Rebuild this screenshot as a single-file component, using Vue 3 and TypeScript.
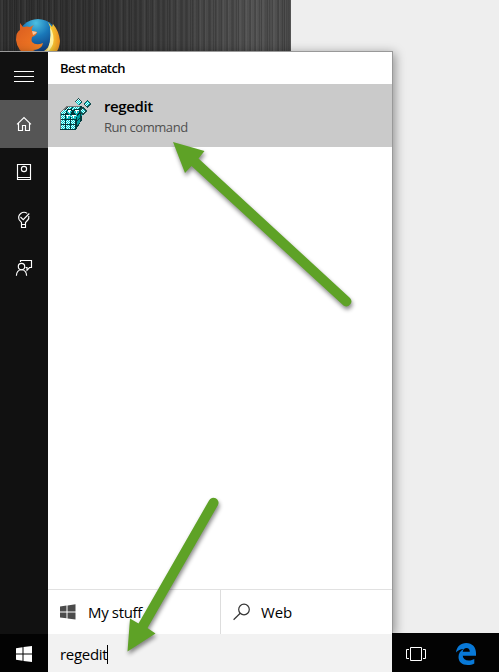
<script setup lang="ts">
import { ref } from 'vue'

const query = ref<string>('regedit')
const cells: { x: number; y: number }[] = []
for (let row = 0; row < 3; row++) {
  for (let col = 0; col < 3; col++) cells.push({ x: 1 + col * 5, y: 17 + row * 5 })
}
const grain = Array.from({ length: 291 }, (_, x) => ({
  x,
  light: (x * 37 + x * x * 11) % 17 > 8,
  alpha: ((x * 53 + x * x * 7) % 23) / 230,
}))
</script>

<template>
  <main class="desktop">
    <div class="wallpaper">
      <svg class="grain" width="291" height="51" viewBox="0 0 291 51" shape-rendering="crispEdges">
        <rect v-for="line in grain" :key="line.x" :x="line.x" y="0" width="1" height="51" :fill="line.light ? '#aaa' : '#000'" :fill-opacity="line.alpha * (line.light ? 1 : 2)" />
      </svg>
      <svg class="firefox" viewBox="0 0 44 44" width="44" height="44">
        <defs>
          <radialGradient id="globe" cx=".45" cy=".1" r=".75">
            <stop offset="0" stop-color="#4cc0e2" /><stop offset=".45" stop-color="#1977b8" /><stop offset="1" stop-color="#103878" />
          </radialGradient>
          <linearGradient id="fox" x1="0" y1="0" x2="1" y2="1">
            <stop offset="0" stop-color="#d75b20" /><stop offset=".55" stop-color="#ee7422" /><stop offset="1" stop-color="#f7a32c" />
          </linearGradient>
          <linearGradient id="tail" x1="0" y1="0" x2="1" y2="0">
            <stop offset="0" stop-color="#fff19a" /><stop offset=".55" stop-color="#f7cb35" /><stop offset="1" stop-color="#e98c20" />
          </linearGradient>
        </defs>
        <circle cx="22" cy="20" r="20" fill="url(#globe)" />
        <path d="M32 3L36 8L37 5Q43 12 44 22Q43 36 30 42L25 34Q35 29 35 18Q36 11 32 3Z" fill="url(#tail)" />
        <path d="M34 8Q39 16 37 25Q34 32 29 35Q36 25 34 8Z" fill="#fff3a4" />
        <path d="M4 4L7 8Q11 7 14 8L18 6Q15 9 16 12L21 13Q21 16 16 18Q15 21 16 23Q20 27 27 24L26 27Q23 31 17 31Q25 36 33 33Q25 43 13 38Q1 32 0 21Q0 13 4 11Z" fill="url(#fox)" />
        <path d="M16 12L21 13Q20 15 17 16Z" fill="#f8c69e" />
      </svg>
    </div>

    <div class="cortana">
      <nav class="rail">
        <button class="rail-item" aria-label="Menu">
          <svg class="menu" width="20" height="20" viewBox="0 0 20 20"><path d="M0 5.5H20M0 10.5H20M0 15.5H20" /></svg>
        </button>
        <button class="rail-item active" aria-label="Home">
          <svg width="20" height="20" viewBox="0 0 20 20"><path d="M3 10.3L10 3.5L17 10.3M4.5 9V16.5H8.5V11.5H11.5V16.5H15.5V9" /></svg>
        </button>
        <button class="rail-item" aria-label="Notebook">
          <svg width="20" height="20" viewBox="0 0 20 20"><path d="M3.5 2.5H16.5V17.5H3.5ZM3.5 15.5H16.5" /><circle cx="10" cy="7" r="2.6" /></svg>
        </button>
        <button class="rail-item" aria-label="Reminders">
          <svg width="20" height="20" viewBox="0 0 20 20"><path d="M7.5 14.5V12.5L5.2 9.8A5.3 5.3 0 0 1 13.2 3.4M14.8 6Q15.2 8.5 13.8 10L11.5 12.5V14.5M7.5 14.5H11.5V17.5H7.5ZM6.5 7L9.2 9.6L15.3 3.5" /></svg>
        </button>
        <button class="rail-item" aria-label="Feedback">
          <svg width="20" height="20" viewBox="0 0 20 20"><path d="M6.5 4V2.5H17.5V9.5H15.5L13 12.3V9.5H11.5" /><circle cx="7.5" cy="8.5" r="3.2" /><path d="M2.4 17.8Q2.7 11.7 7.5 11.7Q12.3 11.7 12.6 17.8" /></svg>
        </button>
      </nav>

      <section class="results">
        <h2 class="heading">Best match</h2>
        <div class="match">
          <svg class="registry" width="32" height="32" viewBox="0 0 32 32" shape-rendering="crispEdges">
            <defs>
              <pattern id="dither" width="2" height="2" patternUnits="userSpaceOnUse">
                <rect width="2" height="2" fill="#d8ffff" /><path d="M0 0H1V1H0ZM1 1H2V2H1Z" fill="#00c5c8" />
              </pattern>
            </defs>
            <path d="M0 14L6 8H22V22L16 32H0Z" fill="#003b3d" />
            <path d="M0 14L6 8H20V9H7L1 15V31H0Z" fill="#777" />
            <path d="M1 16V14L3 12H7L5 16ZM6 11L8 9H12L10 12H6ZM13 9H20L18 12H12Z" fill="url(#dither)" />
            <rect v-for="(cell, i) in cells" :key="i" :x="cell.x" :y="cell.y" width="4" height="4" fill="url(#dither)" />
            <path d="M17 18L20 15V19L17 22ZM17 24L20 20V24L17 28ZM21 14L22 12V17L21 19Z" fill="#009da0" />
            <path d="M7 11H12L14 15L9 18L6 15ZM14 11H19L21 14L17 18L13 15Z" fill="#003638" />
            <path d="M8 12L12 13L10 17L7 15ZM15 12L20 13L17 17L14 15ZM6 17H11L10 21H6ZM12 17H17L16 21H12Z" fill="#18bec1" />
            <path d="M8 12H11V13H10V15H9V14H8ZM15 12H19V13H17V15H16V13H15ZM6 17H10V18H8V20H7V18H6ZM12 17H16V18H14V20H13V18H12Z" fill="#fff" />
            <g fill="#174c4e"><path d="M18 0L22 4L19 8L15 4Z" /><path d="M27 2L32 6L27 10L23 6Z" /><path d="M23 9L28 13L23 17L18 13Z" /></g>
            <g fill="url(#dither)"><path d="M18 1L21 4L18 7L16 4Z" /><path d="M27 3L30 6L27 8L24 6Z" /><path d="M23 11L26 13L23 15L20 13Z" /></g>
          </svg>
          <div class="match-copy">
            <strong>regedit</strong>
            <span>Run command</span>
          </div>
        </div>
        <div class="blank"></div>
        <div class="scopes">
          <button class="scope">
            <svg width="16" height="16" viewBox="0 0 16 16"><path d="M0 2.5L6.5 1.6V7.5H0ZM7.5 1.4L15.5 .3V7.5H7.5ZM0 8.5H6.5V14.2L0 13.4ZM7.5 8.5H15.5V15.5L7.5 14.4Z" fill="#4b4b4b" /></svg>
            <span class="stuff">My stuff</span>
          </button>
          <button class="scope web">
            <svg width="18" height="18" viewBox="0 0 18 18" fill="none" stroke="#333" stroke-width="1.2"><circle cx="11" cy="6.5" r="5.3" /><path d="M7.2 10.3L.6 16.8" /></svg>
            <span>Web</span>
          </button>
        </div>
      </section>
    </div>

    <footer class="taskbar">
      <button class="start" aria-label="Start">
        <svg width="16" height="16" viewBox="0 0 16 16"><path d="M0 2.3L6.5 1.3V7.5H0ZM7.5 1.1L16 0V7.5H7.5ZM0 8.5H6.5V14.7L0 13.7ZM7.5 8.5H16V16L7.5 14.9Z" fill="#fff" /></svg>
      </button>
      <div class="search"><span>{{ query }}</span><i class="caret"></i></div>
      <div class="apps">
        <svg class="task-view" width="20" height="14" viewBox="0 0 20 14" fill="none" stroke="#fff"><path d="M4.5 .5H15.5V13.5H4.5ZM3 2.5H.5V11.5H3M17 2.5H19.5V11.5H17" /></svg>
        <svg class="edge" width="20" height="22" viewBox="0 0 20 22"><path fill="#0879d8" d="M0 9.5C.8 3.5 4.7 0 10.2 0C16.3 0 20 4.3 20 10V12.7H6.7C7 15.9 9.4 17.5 12.8 17.5C15.1 17.5 16.8 16.9 18.3 16V20.4C16.4 21.5 14.3 22 11.7 22C5.9 22 2.5 18.9 2.5 14C2.5 10.6 4.3 7.7 7.7 6.1C4.4 6.1 2 7.3 0 9.5ZM6.7 8.8H13.8C13.8 6.4 12.7 5 10.6 5C8.5 5 7.1 6.3 6.7 8.8Z" /></svg>
      </div>
    </footer>

    <svg class="arrows" width="499" height="672" viewBox="0 0 499 672">
      <g fill="#5ea226">
        <path d="M173 142L204.5 151L198.5 158.5L350 298A5 5 0 0 1 343.5 305.5L191.5 166L185 173Z" />
        <path d="M127.5 651.5L130 618.5L138.5 623.5L209 500.5A5 5 0 0 1 218 505L147.5 628L155.5 633.5Z" />
      </g>
    </svg>
  </main>
</template>

<style>
body { margin: 0; }
</style>

<style scoped>
* { box-sizing: border-box; }
.desktop { width: 499px; height: 672px; position: relative; overflow: hidden; display: grid; grid-template-rows: 51px 583px 38px; background: #eee; font-family: "Open Sans", "Noto Sans", sans-serif; color: #000; }
button { margin: 0; padding: 0; border: 0; background: none; font: inherit; color: inherit; }
svg { display: block; flex: none; }
.wallpaper { position: relative; width: 291px; height: 51px; padding: 19px 0 0 16px; background: linear-gradient(90deg, #303030, #353535 35%, #424242 60%, #545454 88%, #4b4b4b); }
.grain { position: absolute; inset: 0; }
.firefox { position: relative; }
.cortana { width: 393px; height: 583px; display: flex; border-top: 1px solid #999; border-right: 1px solid #999; box-shadow: 2px 2px 10px #0006; clip-path: inset(-14px -14px 0 0); z-index: 1; }
.rail { width: 48px; background: #111; display: flex; flex-direction: column; }
.rail-item { width: 48px; height: 48px; display: grid; place-items: center; }
.rail-item.active { background: #555; }
.rail-item svg { fill: none; stroke: #fff; stroke-width: 1.15; }
.rail-item .menu { stroke-width: 1; }
.results { width: 344px; display: flex; flex-direction: column; background: #fff; }
.heading { height: 32px; margin: 0; padding-left: 12px; font-size: 13px; line-height: 33px; font-weight: 600; letter-spacing: -.57px; }
.match { height: 63px; padding: 14px 12px 0; display: flex; gap: 12px; background: #cacaca; }
.match-copy { display: flex; flex-direction: column; }
.match-copy strong { height: 20px; font-size: 15px; line-height: 17px; font-weight: 600; letter-spacing: -.4px; }
.match-copy span { font-size: 13px; line-height: 19px; color: #505050; letter-spacing: -.45px; }
.blank { flex: 1; }
.scopes { height: 45px; border-top: 1px solid #e1e1e1; display: grid; grid-template-columns: 172px 172px; font-size: 15px; }
.scope { display: flex; align-items: center; gap: 12px; padding-left: 12px; text-align: left; }
.scope span { padding-bottom: 1px; }
.stuff { letter-spacing: -.35px; }
.web { border-left: 1px solid #ddd; letter-spacing: -.1px; }
.web svg { margin-right: -2px; }
.taskbar { display: flex; background: #030303; position: relative; z-index: 2; }
.start { width: 48px; display: grid; place-items: center; padding-top: 2px; }
.search { width: 344px; display: flex; align-items: center; padding: 2px 0 0 12px; background: #f2f2f2; font-size: 15px; letter-spacing: -.29px; }
.caret { width: 1px; height: 19px; background: #000; }
.apps { flex: 1; margin-top: -1px; display: flex; align-items: center; gap: 30px; padding: 2px 0 0 14px; background: #030303; }
.arrows { position: absolute; inset: 0; z-index: 3; filter: drop-shadow(1px 3px 2px #0007); pointer-events: none; }
</style>
